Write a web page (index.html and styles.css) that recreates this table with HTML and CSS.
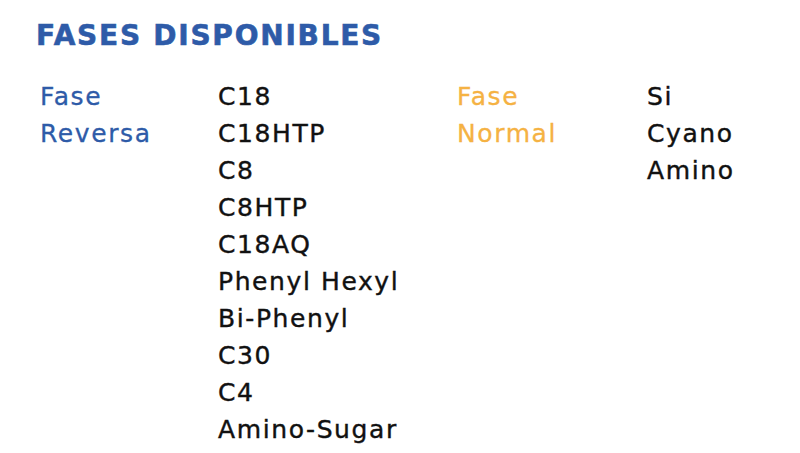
FILE: index.html
```html
<!DOCTYPE html>
<html lang="es">
<head>
<meta charset="utf-8">
<link rel="stylesheet" href="styles.css">
</head>
<body>
<main class="page">
  <h1 class="title">FASES DISPONIBLES</h1>
  <div class="grid">
    <div class="label blue">Fase<br>Reversa</div>
    <ul class="list">
      <li>C18</li>
      <li>C18HTP</li>
      <li>C8</li>
      <li>C8HTP</li>
      <li>C18AQ</li>
      <li>Phenyl Hexyl</li>
      <li>Bi-Phenyl</li>
      <li>C30</li>
      <li>C4</li>
      <li>Amino-Sugar</li>
    </ul>
    <div class="label orange">Fase<br>Normal</div>
    <ul class="list">
      <li>Si</li>
      <li>Cyano</li>
      <li>Amino</li>
    </ul>
  </div>
</main>
</body>
</html>
```

FILE: styles.css
```css
html, body {
  margin: 0;
  padding: 0;
  background: #ffffff;
}
.page {
  width: 800px;
  height: 453px;
  overflow: hidden;
  font-family: "DejaVu Sans", "Liberation Sans", sans-serif;
  padding: 19px 0 0 36px;
  box-sizing: border-box;
}
.title {
  margin: 0;
  font-size: 28px;
  font-weight: 800;
  color: #2e5ba8;
  letter-spacing: 1.75px;
  line-height: 34px;
  -webkit-text-stroke: 0.6px #2e5ba8;
}
.grid {
  display: grid;
  grid-template-columns: 178px 239px 190px auto;
  margin-top: 25px;
  padding-left: 4px;
  font-size: 25px;
  letter-spacing: 1.6px;
  line-height: 37px;
}
.label {
  line-height: 37px;
}
.blue { color: #2e5ba8; -webkit-text-stroke: 0.3px #2e5ba8; }
.orange { color: #f5b243; -webkit-text-stroke: 0.3px #f5b243; }
.list {
  list-style: none;
  margin: 0;
  padding: 0;
  color: #111111;
  -webkit-text-stroke: 0.4px #111111;
}
.list li {
  line-height: 37px;
}
```
